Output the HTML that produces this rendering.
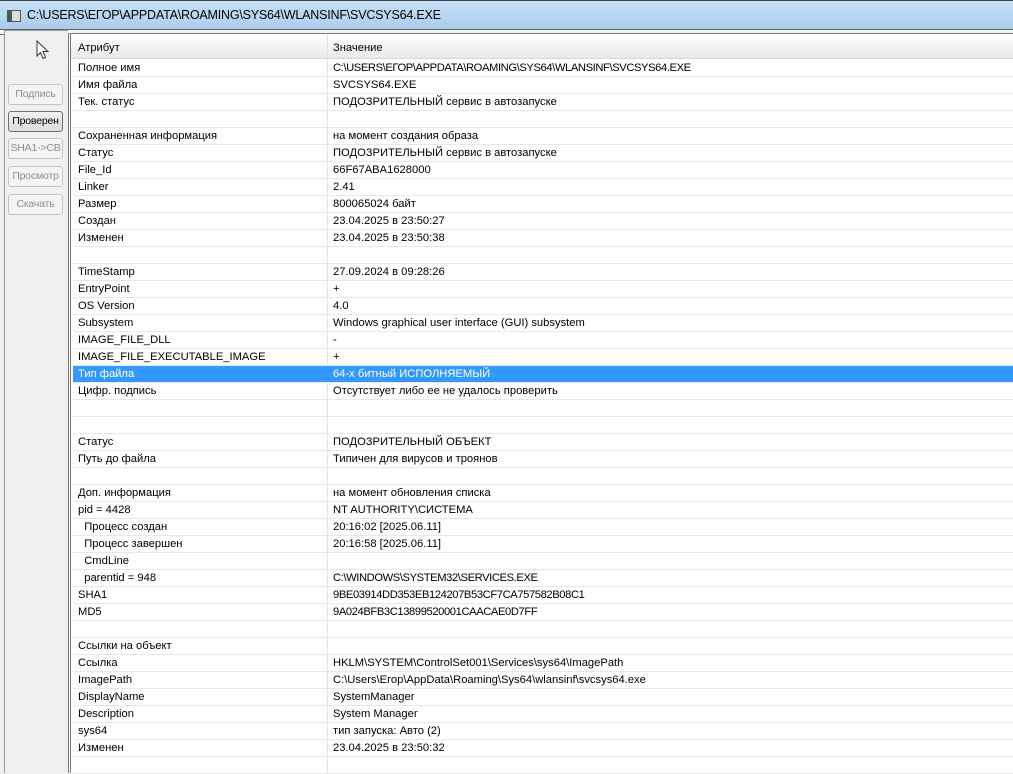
<!DOCTYPE html>
<html><head><meta charset="utf-8"><style>
*{margin:0;padding:0;box-sizing:border-box}
body{width:1013px;height:773px;overflow:hidden;background:#f0f0f0;font-family:"Liberation Sans","DejaVu Sans",sans-serif;font-size:11.2px;position:relative}
.title{position:absolute;left:0;top:0;width:1013px;height:29px;background:linear-gradient(#c7e0f6,#b7d6f3 60%,#a9cbeb);border-top:1px solid #444;}
.title span{position:absolute;left:27px;top:7px;font-size:12.5px;color:#000;letter-spacing:-0.2px}
.ico{position:absolute;left:7px;top:9px;width:14px;height:12px;border:1px solid #555;background:linear-gradient(90deg,#2d6a4a 0 4px,#ddd 4px)}
.lines{position:absolute;left:0;top:29px;width:1013px;height:6px;border-top:1px solid #666;border-bottom:1px solid #666;background:#f4f4f4}
.left{position:absolute;left:4px;top:30px;width:64px;height:743px;border-left:1px solid #999;border-top:1px solid #999;background:#f0f0f0}
.btn{position:absolute;left:8px;width:55px;height:21px;border:1px solid #c4c4c4;border-radius:3px;background:#f4f4f4;color:#8d8d8d;font-size:10.5px;letter-spacing:-0.2px;text-align:center;line-height:19px;white-space:nowrap;overflow:hidden}
.btn.on{border-color:#707070;color:#000;background:linear-gradient(#f2f2f2,#dcdcdc)}
.list{position:absolute;left:68px;top:33px;width:945px;height:740px;border-left:3px double #777;border-top:1px solid #777;background:#fff}
.hdr{position:absolute;left:0;top:1px;width:945px;height:24px;background:linear-gradient(#fff,#f3f3f4 50%,#eaeaeb);border-bottom:1px solid #d5d5d5}
.hdr div{position:absolute;top:7px}
.vsep{position:absolute;left:256px;top:0;width:1px;height:740px;background:#e3e3e3}
.row{position:absolute;left:2px;width:943px;height:17px;border-bottom:1px solid #e8e8e8}
.row .a{position:absolute;left:5px;top:2px;white-space:nowrap}
.row .b{position:absolute;left:260px;top:2px;white-space:nowrap}
.u{letter-spacing:-0.4px}
.sel{background:#3399ff;color:#fff}
</style></head><body>
<div class="title"><div class="ico"></div><span>C:\USERS\ЕГОР\APPDATA\ROAMING\SYS64\WLANSINF\SVCSYS64.EXE</span></div>
<div class="lines"></div>
<div class="left">
<svg style="position:absolute;left:31px;top:9px" width="14" height="20" viewBox="0 0 14 20"><path d="M1 1 L1 16 L4.5 12.5 L7 18.5 L9.5 17.5 L7 11.5 L12 11.5 Z" fill="#fff" stroke="#333" stroke-width="1"/></svg>
</div>
<div class="btn" style="top:84px">Подпись</div>
<div class="btn on" style="top:111px">Проверен</div>
<div class="btn" style="top:138px">SHA1-&gt;CB</div>
<div class="btn" style="top:166px">Просмотр</div>
<div class="btn" style="top:194px">Скачать</div>
<div class="list">
<div class="hdr"><div style="left:7px">Атрибут</div><div style="left:262px">Значение</div></div>
<div class="vsep"></div>
<div id="rows"></div>
</div>
<script>
var d=[["Полное имя","C:\\USERS\\ЕГОР\\APPDATA\\ROAMING\\SYS64\\WLANSINF\\SVCSYS64.EXE"],["Имя файла","SVCSYS64.EXE"],["Тек. статус","ПОДОЗРИТЕЛЬНЫЙ сервис в автозапуске"],["",""],["Сохраненная информация","на момент создания образа"],["Статус","ПОДОЗРИТЕЛЬНЫЙ сервис в автозапуске"],["File_Id","66F67ABA1628000"],["Linker","2.41"],["Размер","800065024 байт"],["Создан","23.04.2025 в 23:50:27"],["Изменен","23.04.2025 в 23:50:38"],["",""],["TimeStamp","27.09.2024 в 09:28:26"],["EntryPoint","+"],["OS Version","4.0"],["Subsystem","Windows graphical user interface (GUI) subsystem"],["IMAGE_FILE_DLL","-"],["IMAGE_FILE_EXECUTABLE_IMAGE","+"],["Тип файла","64-х битный ИСПОЛНЯЕМЫЙ"],["Цифр. подпись","Отсутствует либо ее не удалось проверить"],["",""],["",""],["Статус","ПОДОЗРИТЕЛЬНЫЙ ОБЪЕКТ"],["Путь до файла","Типичен для вирусов и троянов"],["",""],["Доп. информация","на момент обновления списка"],["pid = 4428","NT AUTHORITY\\СИСТЕМА"],["  Процесс создан","20:16:02 [2025.06.11]"],["  Процесс завершен","20:16:58 [2025.06.11]"],["  CmdLine",""],["  parentid = 948","C:\\WINDOWS\\SYSTEM32\\SERVICES.EXE"],["SHA1","9BE03914DD353EB124207B53CF7CA757582B08C1"],["MD5","9A024BFB3C13899520001CAACAE0D7FF"],["",""],["Ссылки на объект",""],["Ссылка","HKLM\\SYSTEM\\ControlSet001\\Services\\sys64\\ImagePath"],["ImagePath","C:\\Users\\Егор\\AppData\\Roaming\\Sys64\\wlansinf\\svcsys64.exe"],["DisplayName","SystemManager"],["Description","System Manager"],["sys64","тип запуска: Авто (2)"],["Изменен","23.04.2025 в 23:50:32"],["",""]];
var h="";
d.forEach(function(r,i){var t=26+i*17;var a=r[0].replace(/^  /,"&nbsp;&nbsp;");
var up=/^[^a-zа-я]*$/.test(r[1].replace(/[a-zа-я]{0,3}$/,""))&&r[1].length>24;
h+='<div class="row'+(i==18?' sel':'')+'" style="top:'+t+'px"><span class="a">'+a+'</span><span class="b'+(up?' u':'')+'">'+r[1]+'</span></div>';});
document.getElementById("rows").innerHTML=h;
</script>
</body></html>
